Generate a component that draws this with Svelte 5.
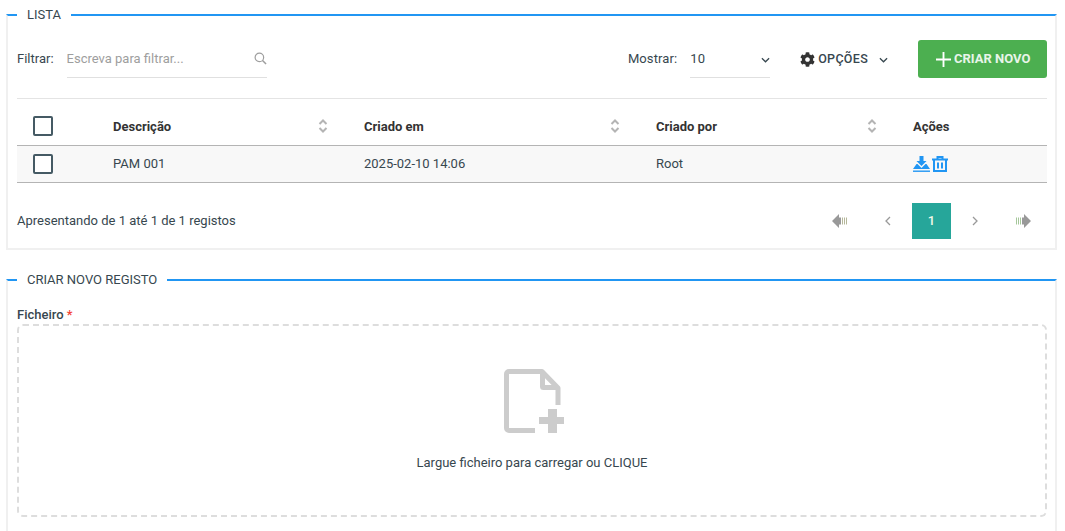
<script>
  let filter = ''
  let selected = false
  const rows = [{ descricao: 'PAM 001', criadoEm: '2025-02-10 14:06', criadoPor: 'Root' }]
  const columns = ['Descrição', 'Criado em', 'Criado por']
</script>

<div class="page">
  <fieldset class="panel list-panel">
    <legend>LISTA</legend>

    <div class="toolbar">
      <span class="label">Filtrar:</span>
      <div class="search">
        <input type="text" bind:value={filter} placeholder="Escreva para filtrar..." />
        <svg viewBox="0 0 14 14" width="13" height="13">
          <circle cx="5.8" cy="5.8" r="4.6" fill="none" stroke="#9e9e9e" stroke-width="1.3" />
          <path d="M9.2 9.2l3.8 3.8" stroke="#9e9e9e" stroke-width="1.6" />
        </svg>
      </div>

      <span class="label show">Mostrar:</span>
      <div class="page-size">
        <span>10</span>
        <svg class="chev" viewBox="0 0 10 6" width="9" height="6"><path d="M1 1l4 4 4-4" fill="none" stroke="#37474f" stroke-width="1.4" /></svg>
      </div>

      <div class="options">
        <svg viewBox="0 0 512 512" width="15" height="15">
          <path fill="#333" d="M487.4 315.7l-42.6-24.6c4.3-23.2 4.3-47 0-70.2l42.6-24.6c4.9-2.8 7.1-8.6 5.5-14-11.1-35.6-30-67.8-54.7-94.6-3.8-4.1-10-5.1-14.8-2.3L380.8 110c-17.9-15.4-38.5-27.3-60.8-35.1V25.8c0-5.6-3.9-10.5-9.4-11.7-36.7-8.2-74.3-7.8-109.2 0-5.5 1.2-9.4 6.1-9.4 11.7V75c-22.2 7.9-42.8 19.8-60.8 35.1L88.7 85.5c-4.9-2.8-11-1.9-14.8 2.3-24.7 26.7-43.6 58.9-54.7 94.6-1.7 5.4.6 11.2 5.5 14L67.3 221c-4.3 23.2-4.3 47 0 70.2l-42.6 24.6c-4.9 2.8-7.1 8.6-5.5 14 11.1 35.6 30 67.8 54.7 94.6 3.8 4.1 10 5.1 14.8 2.3l42.6-24.6c17.9 15.4 38.5 27.3 60.8 35.1v49.2c0 5.6 3.9 10.5 9.4 11.7 36.7 8.2 74.3 7.8 109.2 0 5.5-1.2 9.4-6.1 9.4-11.7v-49.2c22.2-7.9 42.8-19.8 60.8-35.1l42.6 24.6c4.9 2.8 11 1.9 14.8-2.3 24.7-26.7 43.6-58.9 54.7-94.6 1.5-5.5-.7-11.3-5.6-14.1zM256 336c-44.1 0-80-35.9-80-80s35.9-80 80-80 80 35.9 80 80-35.9 80-80 80z" />
        </svg>
        <span>OPÇÕES</span>
        <svg class="chev" viewBox="0 0 10 6" width="9" height="6"><path d="M1 1l4 4 4-4" fill="none" stroke="#37474f" stroke-width="1.4" /></svg>
      </div>

      <button class="create">
        <svg viewBox="0 0 16 16" width="15" height="15"><path d="M8 0v16M0 8h16" stroke="#fff" stroke-width="2" /></svg>
        <span>CRIAR NOVO</span>
      </button>
    </div>

    <table>
      <thead>
        <tr>
          <th class="check"><input type="checkbox" bind:checked={selected} /></th>
          {#each columns as col}
            <th>
              <div class="sortable">
                {col}
                <svg viewBox="0 0 10 14" width="10" height="14">
                  <path d="M1.5 5l3.5-3.5L8.5 5M1.5 9l3.5 3.500L8.500 9" fill="none" stroke="#b4b4b4" stroke-width="2" />
                </svg>
              </div>
            </th>
          {/each}
          <th>Ações</th>
        </tr>
      </thead>
      <tbody>
        {#each rows as row}
          <tr>
            <td class="check"><input type="checkbox" /></td>
            <td class="text">{row.descricao}</td>
            <td class="text">{row.criadoEm}</td>
            <td class="text">{row.criadoPor}</td>
            <td>
              <div class="actions">
                <svg viewBox="0 0 17 16" width="17" height="16">
                  <path fill="#2196f3" d="M6.5 0h4v5h3l-5 5-5-5h3zM0 13l3.5-5 1 0 4 4 4-4 1 0 3.500 5z" />
                  <path stroke="#2196f3" stroke-width="1.4" d="M0 15.200h17" />
                </svg>
                <svg viewBox="0 0 16 16" width="16" height="16">
                  <path fill="none" stroke="#2196f3" stroke-width="2" d="M2 4v11h12V4M0 3.500h16M5.500 3V1h5v2" />
                  <path stroke="#2196f3" stroke-width="2" d="M6 6.500v6M10 6.500v6" />
                </svg>
              </div>
            </td>
          </tr>
        {/each}
      </tbody>
    </table>

    <div class="list-footer">
      <span>Apresentando de 1 até 1 de 1 registos</span>
      <nav class="pager">
        <span class="pg">
          <svg viewBox="0 0 16 14" width="16" height="14">
            <path fill="#999" d="M0 7l7-7v3.500h2v7H7V14z" />
            <path stroke="#b5b79a" stroke-width="1" d="M10.500 3.500v7M12.500 3.500v7M14.500 3.500v7" />
          </svg>
        </span>
        <span class="pg">
          <svg viewBox="0 0 6 10" width="6" height="10"><path d="M5 1L1 5l4 4" fill="none" stroke="#999" stroke-width="1.300" /></svg>
        </span>
        <span class="pg current">1</span>
        <span class="pg">
          <svg viewBox="0 0 6 10" width="6" height="10"><path d="M1 1l4 4-4 4" fill="none" stroke="#999" stroke-width="1.300" /></svg>
        </span>
        <span class="pg">
          <svg viewBox="0 0 16 14" width="16" height="14">
            <path fill="#999" d="M16 7L9 0v3.500H7v7h2V14z" />
            <path stroke="#a5c79a" stroke-width="1" d="M1.500 3.500v7M3.500 3.500v7M5.500 3.500v7" />
          </svg>
        </span>
      </nav>
    </div>
  </fieldset>

  <fieldset class="panel form-panel">
    <legend>CRIAR NOVO REGISTO</legend>
    <div class="field-label">Ficheiro <span class="req">*</span></div>
    <div class="dropzone">
      <svg viewBox="0 0 61 64" width="61" height="64">
        <path fill="none" stroke="#ccc" stroke-width="5" stroke-linejoin="round" d="M31 61.500H5a2.500 2.500 0 0 1-2.500-2.500V5A2.500 2.500 0 0 1 5 2.500h33L54 19v17" />
        <path fill="none" stroke="#ccc" stroke-width="5" stroke-linejoin="round" d="M38.500 3v14.500a1 1 0 0 0 1 1H54" />
        <path stroke="#ccc" stroke-width="9" d="M48.500 40v24" />
        <path stroke="#ccc" stroke-width="7" d="M35 51.500h25" />
      </svg>
      <p>Largue ficheiro para carregar ou CLIQUE</p>
    </div>
  </fieldset>
</div>

<style>
  :global(body) {
    margin: 0;
    background: #fff;
    font-family: Roboto, "Liberation Sans", sans-serif;
    font-size: 13px;
    color: #333;
  }

  .page {
    padding: 7px 8px 0 6px;
    height: 524px;
    overflow: hidden;
  }

  .panel {
    margin: 0;
    min-width: 0;
    border: 2px solid #f0f0f0;
    border-top: 2px solid #2196f3;
    padding: 0 8px 0 9px;
  }

  .panel legend {
    padding: 0 10px;
    font-size: 13px;
    line-height: 16px;
    color: #37474f;
  }

  .list-panel {
    height: 243px;
    box-sizing: border-box;
    margin-bottom: 22px;
  }

  .form-panel {
    border-bottom: none;
    height: 260px;
    box-sizing: border-box;
  }

  .toolbar {
    display: flex;
    align-items: center;
    height: 38px;
    margin-top: 17px;
    padding-bottom: 20px;
    border-bottom: 1px solid #e4e4e4;
  }

  .label {
    margin-bottom: 1px;
    color: #37474f;
  }

  .search {
    position: relative;
    display: flex;
    align-items: center;
    margin-left: 13px;
    width: 200px;
    height: 38px;
    border-bottom: 1px solid #e0e0e0;
    box-sizing: border-box;
  }

  .search input {
    border: none;
    outline: none;
    padding: 0;
    width: 170px;
    font: inherit;
    color: #333;
  }

  .search input::placeholder {
    color: #9e9e9e;
    opacity: 1;
  }

  .search svg {
    position: absolute;
    right: 0;
    top: 12px;
  }

  .show {
    margin-left: auto;
    letter-spacing: 0.1px;
  }

  .page-size {
    display: flex;
    align-items: center;
    justify-content: space-between;
    margin-left: 13px;
    width: 80px;
    height: 38px;
    box-sizing: border-box;
    border-bottom: 1px solid #e0e0e0;
    color: #37474f;
    letter-spacing: 0.3px;
  }

  .page-size .chev {
    margin-top: 3px;
  }

  .options {
    display: flex;
    align-items: center;
    margin-left: 30px;
    color: #37474f;
    font-weight: 500;
    font-size: 12.500px;
    letter-spacing: 0.3px;
  }

  .options span {
    margin: 0 0 1px 3px;
  }

  .options .chev {
    margin: 2px 0 0 11px;
  }

  .create {
    display: flex;
    align-items: center;
    gap: 3px;
    margin-left: 30px;
    width: 129px;
    height: 38px;
    padding: 0 0 0 18px;
    border: none;
    border-radius: 3px;
    background: #4caf50;
    color: #e8f5e9;
    font: 700 13px Roboto, "Liberation Sans", sans-serif;
  }

  .create span {
    margin-bottom: 2px;
  }

  table {
    width: 100%;
    table-layout: fixed;
    border-collapse: collapse;
  }

  th {
    box-sizing: border-box;
    height: 46px;
    padding: 9px 0 0;
    text-align: left;
    font-weight: 700;
    font-size: 13px;
    color: #333;
    border-bottom: 1px solid #b4b4b4;
  }

  th:nth-child(1) { width: 96px; }
  th:nth-child(2) { width: 251px; }
  th:nth-child(3) { width: 292px; }
  th:nth-child(4) { width: 257px; }

  td {
    box-sizing: border-box;
    height: 37px;
    padding: 0;
    background: #f8f8f8;
    color: #37474f;
    border-bottom: 1px solid #b4b4b4;
  }

  td.text {
    padding-bottom: 1px;
  }

  th.check,
  td.check {
    padding-left: 16px;
  }

  .check input {
    display: block;
    appearance: none;
    width: 20px;
    height: 20px;
    margin: 0;
    box-sizing: border-box;
    border: 2px solid #455a64;
    border-radius: 2px;
    background: #fff;
  }

  .sortable {
    display: flex;
    align-items: center;
    justify-content: space-between;
    padding-right: 36px;
  }

  .actions {
    display: flex;
    align-items: center;
    gap: 2px;
  }

  .list-footer {
    display: flex;
    align-items: center;
    justify-content: space-between;
    margin-top: 20px;
    color: #37474f;
  }

  .pager {
    display: flex;
  }

  .pg {
    display: flex;
    align-items: center;
    justify-content: center;
    width: 48px;
    height: 36px;
  }

  .pg.current {
    width: 39px;
    background: #26a69a;
    color: #f1f8e9;
    font-weight: 500;
  }

  .field-label {
    margin-top: 18px;
    color: #37474f;
    font-weight: 500;
    line-height: 18px;
  }

  .req {
    color: #f44336;
  }

  .dropzone {
    display: flex;
    flex-direction: column;
    align-items: center;
    box-sizing: border-box;
    height: 193px;
    padding-top: 43px;
    border: 2px dashed #ddd;
    border-radius: 6px;
  }

  .dropzone svg {
    margin-left: 5px;
  }

  .dropzone p {
    margin: 22px 0 0;
    color: #37474f;
  }
</style>
